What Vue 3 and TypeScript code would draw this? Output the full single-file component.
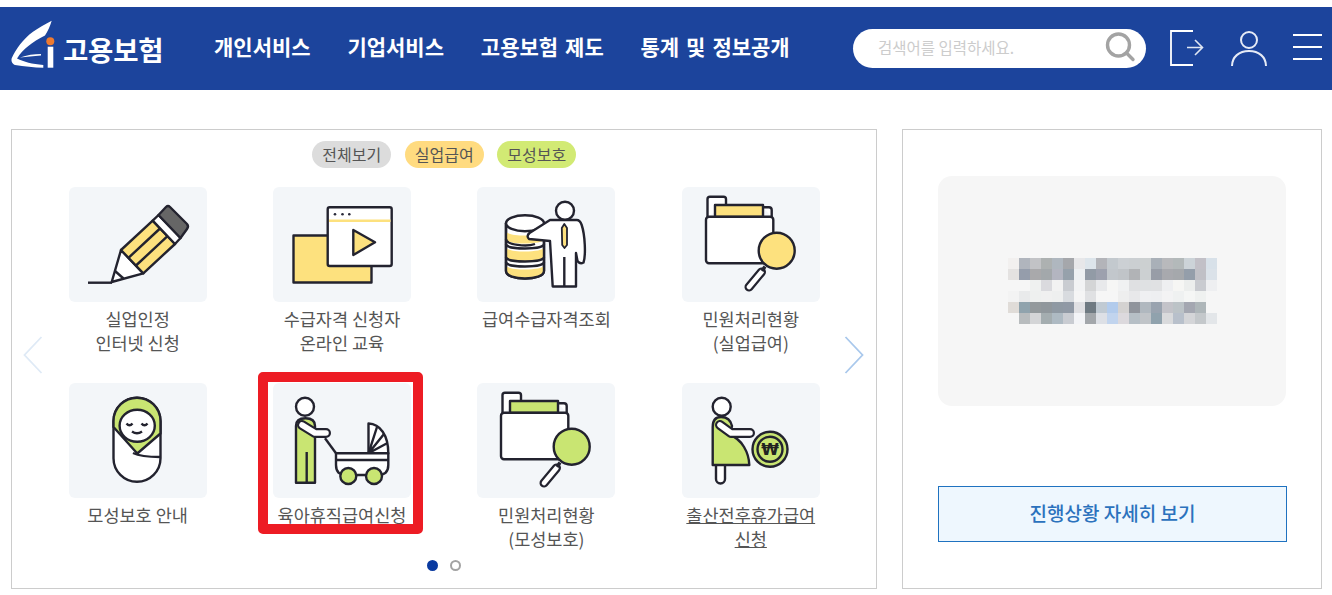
<script setup lang="ts">
interface MenuItem {
  lines: string[];
  icon: string;
  underline?: boolean;
}

const navItems = ['개인서비스', '기업서비스', '고용보험 제도', '통계 및 정보공개'];

const chips = [
  { label: '전체보기', cls: 'chip-all' },
  { label: '실업급여', cls: 'chip-job' },
  { label: '모성보호', cls: 'chip-mom' },
];

const menuItems: MenuItem[] = [
  { lines: ['실업인정', '인터넷 신청'], icon: 'pencil' },
  { lines: ['수급자격 신청자', '온라인 교육'], icon: 'video' },
  { lines: ['급여수급자격조회'], icon: 'database' },
  { lines: ['민원처리현황', '(실업급여)'], icon: 'folder-y' },
  { lines: ['모성보호 안내'], icon: 'baby' },
  { lines: ['육아휴직급여신청'], icon: 'stroller' },
  { lines: ['민원처리현황', '(모성보호)'], icon: 'folder-g' },
  { lines: ['출산전후휴가급여', '신청'], icon: 'mother', underline: true },
];

// blurred block in the status card, 19 x 6 cells
const mosaic = [
  'f2f0ef b0b5bd c2c3c6 adb1b1 afb7bf a5a7ab e7e7e9 dde5eb b3b4b9 c3c9ce ccd0d4 cbcfd2 ccd0d1 a9b0b8 b8b9bc b3b9ba ccd3d8 c2c0c7 d8e1e9',
  'e4e2e1 959dab a9a9ab a3a8ab b3b5c0 96a1ab edf0f2 929ba6 9da1ae c2c7cc c0c4c8 b1b3b6 ccd0d2 989da7 a8a9ae a5a8ac 949eaa c0c0c6 dbe2e9',
  'f6f6f6 f6f6f6 eff1f0 dadade f2f2f2 c9ccd1 f2f3f4 d4d5d6 e8e9eb f6f6f5 f0f1f2 dfe0e2 dfe1e3 e0e1e3 eeeff1 f6f6f4 eceeed c9cbd0 eeeff1',
  'f3f3f3 e9eaeb eef0ef f0f0f0 eeefef d8dbdf f5f5f5 e0e1e3 f6f6f6 f6f6f6 eeeeee e8e8ea eff0f2 eeeff1 f3f3f4 eff1f1 f5f6f5 eff1f0 f6f6f6',
  'e0dcd8 90a3ad 93999c 90979c 8f99a3 9099a5 e0e0e3 6f7a82 c0cad3 b2cbec d4d2d1 90949c b0b8bf 99a3af c3c3c9 bcc3c7 a4a7b1 aeb6b9 f6f6f6',
  'f6f6f6 b8bcbe d4d5d7 a4adb0 aebac3 c9ccd2 f3f4f7 a3a7ab dde0e6 c1d4ee dcd9dd b6bfc6 c0c4c8 90a2ad d9dadc b8c0cb d4d5d8 c4c8cb e3e6e9',
].flatMap((row) => row.split(' ').map((c) => '#' + c));
</script>

<template>
  <div class="page">
    <header class="header">
      <a class="logo">
        <svg class="logo-mark" viewBox="0 0 46 50" width="46" height="50" aria-hidden="true">
          <path d="M41.7 0.7 C36 4 28 8 23 11.7 C13 19 6 29 1.7 38.3 C1 41 2 44 5 45 C14 46.5 24 47.5 33.3 47.7 L33.3 45 C22 44 14 42 7 38.5 C13 29 22 22 35 15.5 C38 11 40 6 41.7 0.7 Z" fill="#fff" />
          <path d="M10 37.5 C17 35 24 34 31 34 L31 35.5 C23 36 17 37 10 37.5 Z" fill="#fff" />
          <rect x="37.7" y="26.7" width="5.6" height="21" fill="#fff" />
          <circle cx="40.3" cy="21.3" r="4" fill="#ee7a30" />
        </svg>
        <span class="logo-text">고용보험</span>
      </a>
      <nav class="nav">
        <a v-for="item in navItems" :key="item">{{ item }}</a>
      </nav>
      <div class="tools">
        <div class="search">
          <span class="placeholder">검색어를 입력하세요.</span>
          <svg viewBox="0 0 32 32" width="32" height="32" aria-hidden="true">
            <circle cx="14.5" cy="14" r="11" fill="none" stroke="#a3a3a3" stroke-width="3.4" />
            <path d="M22.5 22 L29 28.5" stroke="#a3a3a3" stroke-width="3.4" stroke-linecap="round" />
          </svg>
        </div>
        <svg class="tool-logout" viewBox="0 0 34 36" width="34" height="36" aria-hidden="true">
          <path d="M23 1 H1 V35 H23" fill="none" stroke="#fff" stroke-width="1.8" />
          <path d="M17 17.5 H32 M25 10 L32.5 17.5 L25 25" fill="none" stroke="#dfe6f3" stroke-width="1.6" />
        </svg>
        <svg class="tool-user" viewBox="0 0 36 38" width="36" height="38" aria-hidden="true">
          <circle cx="18" cy="11" r="8" fill="none" stroke="#e6ebf6" stroke-width="2" />
          <path d="M1 37 C1 28 8 22 18 22 C28 22 35 28 35 37" fill="none" stroke="#e6ebf6" stroke-width="2" />
        </svg>
        <div class="hamburger"><i /><i /><i /></div>
      </div>
    </header>

    <main class="main">
      <section class="panel menu-panel">
        <div class="chips">
          <span v-for="chip in chips" :key="chip.label" class="chip" :class="chip.cls">{{ chip.label }}</span>
        </div>

        <div class="grid">
          <a v-for="item in menuItems" :key="item.lines[0] + item.icon" class="item">
            <div class="tile">
              <svg viewBox="0 0 138 115" width="138" height="115" class="art" aria-hidden="true">
                <!-- pencil -->
                <g v-if="item.icon === 'pencil'">
                  <path d="M19 95.7 H43" />
                  <path d="M52 63 L74.3 86.3 L42.7 95 Z" fill="#fff" />
                  <path d="M46 84 L54.5 91.5" />
                  <path d="M52 63 L83.7 33.7 L106 57 L74.3 86.3 Z" fill="#fde17e" />
                  <path d="M59.5 70.8 L91 41.5 M67 78.5 L98.5 49.2" />
                  <path d="M83.7 33.7 L89.5 28 L111.5 51 L106 57 Z" fill="#fff" />
                  <path d="M89.5 28 L97 20 Q99 18 101 20 L118 37 Q120 39.5 118 42 L111.5 51 Z" fill="#666" />
                </g>
                <!-- video window -->
                <g v-else-if="item.icon === 'video'">
                  <rect x="20.5" y="48.5" width="78" height="47" fill="#fde17e" />
                  <rect x="54.7" y="20.3" width="64" height="58.7" rx="2" fill="#fff" />
                  <circle cx="62" cy="27.3" r="1.3" fill="#2a2a3a" stroke="none" />
                  <circle cx="69.5" cy="27.3" r="1.3" fill="#2a2a3a" stroke="none" />
                  <circle cx="76.3" cy="27.3" r="1.3" fill="#2a2a3a" stroke="none" />
                  <path d="M56 33.7 H117.5" stroke="#fde17e" />
                  <path d="M80.3 43 L102 55.3 L80.3 68 Z" fill="#fde17e" />
                </g>
                <!-- database and man -->
                <g v-else-if="item.icon === 'database'">
                  <path d="M29 36 V84 C29 94 67 94 67 84 V36 Z" fill="#fff" />
                  <path d="M29 44 C29 50 67 50 67 44 V52 C67 58 29 58 29 52 Z" fill="#fde17e" stroke="none" />
                  <path d="M29 60 C29 66 67 66 67 60 V70 C67 76 29 76 29 70 Z" fill="#fde17e" stroke="none" />
                  <path d="M29 78 C29 84 67 84 67 78 V84 C67 94 29 94 29 84 Z" fill="#fde17e" stroke="none" />
                  <path d="M29 36 V84 C29 94 67 94 67 84 V36" />
                  <path d="M29 52 C29 58 50 60 58 57 M29 57 C29 63 67 63 67 57 M29 70 C29 76 67 76 67 70 M29 75 C29 81 67 81 67 75" />
                  <ellipse cx="48" cy="36.3" rx="19" ry="8" fill="#fff" />
                  <path d="M73 33 L52.5 46 Q49 49 52 52 L73 54 L75.7 99.5 H99 V66 L100.5 74 Q103 77.5 106.5 75.5 C109 68 108 48 104.7 38 Q103 33 99.7 33 Z" fill="#fff" />
                  <path d="M87.3 70 V99.5" />
                  <circle cx="88" cy="23.7" r="9" fill="#fff" />
                  <path d="M87.3 37 L84.8 41 L85.2 58 L87.5 61 L90 58 L90 41 Z" fill="#fde17e" stroke-width="1.8" />
                </g>
                <!-- folder with magnifier -->
                <g v-else-if="item.icon === 'folder-y' || item.icon === 'folder-g'">
                  <path d="M25.5 30 V12 Q25.5 9.7 28 9.7 H41.5 Q44 9.7 44 12 V18" fill="#fff" />
                  <path d="M81 20.3 H87 Q89.7 20.3 89.7 23 V30" fill="#fff" />
                  <rect x="33" y="18" width="48" height="12" :fill="item.icon === 'folder-y' ? '#fde17e' : '#c9e572'" />
                  <rect x="24" y="29.7" width="67.3" height="46.6" rx="3" fill="#fff" />
                  <path d="M79.5 85 L67 100" stroke-width="9" stroke-linecap="round" />
                  <path d="M79.5 85 L67 100" stroke="#fff" stroke-width="4.6" stroke-linecap="round" />
                  <path d="M83 79.5 L80 84" stroke-width="3.4" />
                  <circle cx="94.7" cy="63.7" r="18" :fill="item.icon === 'folder-y' ? '#fde17e' : '#c9e572'" />
                </g>
                <!-- swaddled baby -->
                <g v-else-if="item.icon === 'baby'">
                  <rect x="44.5" y="14.7" width="47" height="84" rx="23.5" fill="#fff" />
                  <path d="M44.5 38.2 C44.5 24 56 14.7 68 14.7 C80 14.7 91.5 24 91.5 38.2 V50.5 L68.3 70.5 L44.5 44 Z" fill="#c9e572" />
                  <path d="M64 70 C72 74 82 74 91 74" />
                  <ellipse cx="68.2" cy="42.7" rx="17.6" ry="16" fill="#fff" />
                  <path d="M57.5 40.5 Q60.5 44 63.5 40.5 M72.5 40.5 Q75.5 44 78.5 40.5" />
                  <path d="M63 48.5 Q68 52 73 48.5" />
                </g>
                <!-- stroller -->
                <g v-else-if="item.icon === 'stroller'">
                  <path d="M23 99.7 V43 Q23 35.3 32.5 35.3 Q42 35.3 42 43 V99.7 Z" fill="#c9e572" />
                  <path d="M33.7 69 V99.7" />
                  <circle cx="32" cy="23.7" r="9" fill="#fff" />
                  <path d="M29 42 L42 50 H53" stroke-width="10" stroke-linecap="round" stroke-linejoin="round" />
                  <path d="M29 42 L42 50 H53" stroke="#fff" stroke-width="5.6" stroke-linecap="round" stroke-linejoin="round" />
                  <path d="M52 55.3 L63 70.3" />
                  <path d="M95.5 40.5 C107 41 115.3 52 115.3 70.3 H95.5 Z" fill="#fff" />
                  <path d="M95.5 70.3 L104 44 M95.5 70.3 L111 51 M95.5 70.3 L114.5 60" />
                  <path d="M63 70.3 H115.3 V82 Q115.3 92 105 92 H73 Q63 92 63 82 Z" fill="#fff" />
                  <path d="M63 77 H115.3" />
                  <circle cx="75.3" cy="93" r="8" fill="#c9e572" />
                  <circle cx="101" cy="93" r="8" fill="#c9e572" />
                </g>
                <!-- pregnant mother with coin -->
                <g v-else-if="item.icon === 'mother'">
                  <rect x="34" y="78" width="9" height="22.5" rx="4.5" fill="#fff" />
                  <path d="M30.7 82 V44 Q30.7 34 39 34 Q48 34 50 43 L48 52 C60 56 67 70 67.3 82 Z" fill="#c9e572" />
                  <circle cx="39.7" cy="23.7" r="9" fill="#fff" />
                  <path d="M38 42 L49 50 H68" stroke-width="10" stroke-linecap="round" stroke-linejoin="round" />
                  <path d="M38 42 L49 50 H68" stroke="#fff" stroke-width="5.6" stroke-linecap="round" stroke-linejoin="round" />
                  <circle cx="88" cy="66.3" r="17.5" fill="#c9e572" />
                  <circle cx="88" cy="66.3" r="12.5" fill="#c9e572" />
                  <text x="88" y="72" class="won">₩</text>
                </g>
              </svg>
            </div>
            <div class="label" :class="{ underline: item.underline }">
              <span v-for="line in item.lines" :key="line">{{ line }}</span>
            </div>
          </a>
        </div>

        <div class="dots">
          <i class="dot on" />
          <i class="dot" />
        </div>

        <svg class="arrow arrow-left" viewBox="0 0 20 38" width="20" height="38" aria-hidden="true">
          <path d="M18.5 1 L1.5 19 L18.5 37" fill="none" stroke="#dfeaf6" stroke-width="1.8" />
        </svg>
        <svg class="arrow arrow-right" viewBox="0 0 20 38" width="20" height="38" aria-hidden="true">
          <path d="M1.5 1 L18.5 19 L1.5 37" fill="none" stroke="#a9c8ec" stroke-width="1.8" />
        </svg>
        <div class="highlight" />
      </section>

      <aside class="panel status-panel">
        <div class="status-card">
          <div class="mosaic">
            <i v-for="(color, i) in mosaic" :key="i" :style="{ background: color }" />
          </div>
        </div>
        <button class="detail-btn" type="button"><span>진행상황 자세히 보기</span></button>
      </aside>
    </main>
  </div>
</template>

<style>
html,
body {
  margin: 0;
  background: #fff;
  overflow: hidden;
}
</style>

<style scoped>
.page {
  width: 1332px;
  height: 595px;
  padding-top: 7px;
  box-sizing: border-box;
  font-family: 'Noto Sans CJK KR', 'Noto Sans', sans-serif;
  color: #555;
}

.header {
  height: 83px;
  background: #1c449c;
  display: flex;
  align-items: center;
  color: #fff;
}

.logo {
  display: flex;
  align-items: center;
  margin-left: 10px;
  width: 204px;
}

.logo-mark {
  margin-bottom: 8px;
}

.logo-text {
  margin-left: 7px;
  font-size: 27.5px;
  font-weight: 700;
  letter-spacing: -0.2px;
  white-space: nowrap;
}

.nav {
  display: flex;
  gap: 36.8px;
  margin-bottom: 5px;
  font-size: 21px;
  font-weight: 700;
  word-spacing: 2.2px;
  white-space: nowrap;
}

.tools {
  margin-left: auto;
  display: flex;
  align-items: center;
  padding-right: 10px;
}

.search {
  width: 293px;
  height: 39px;
  background: #fff;
  border-radius: 20px;
  display: flex;
  align-items: center;
  justify-content: space-between;
  padding: 0 10px 0 25px;
  box-sizing: border-box;
}

.search svg {
  margin-bottom: 4px;
}

.placeholder {
  font-size: 15.5px;
  color: #ccc;
  margin-bottom: 3px;
}

.tool-logout {
  margin-left: 24px;
  margin-bottom: 2px;
}

.tool-user {
  margin-left: 27px;
  margin-bottom: 2px;
}

.hamburger {
  margin-left: 26px;
  margin-bottom: 3px;
  width: 29px;
  display: flex;
  flex-direction: column;
  gap: 10px;
}

.hamburger i {
  display: block;
  height: 2px;
  background: #fff;
}

.main {
  display: flex;
  gap: 25px;
  padding: 39px 10px 0 11px;
}

.panel {
  border: 1px solid #ccc;
  height: 460px;
  box-sizing: border-box;
  position: relative;
}

.menu-panel {
  width: 866px;
  padding: 11px 24px 0 23.4px;
}

.chips {
  display: flex;
  justify-content: center;
  gap: 13.8px;
  padding-left: 1px;
}

.chip {
  width: 78.7px;
  height: 27px;
  border-radius: 14px;
  font-size: 16px;
  line-height: 26px;
  text-align: center;
  color: #555;
}

.chip-all {
  background: #dcdcdc;
}

.chip-job {
  background: #ffdb80;
}

.chip-mom {
  background: #d2ea74;
}

.grid {
  margin-top: 19px;
  display: grid;
  grid-template-columns: repeat(4, 204.4px);
  grid-auto-rows: 168px;
  row-gap: 28px;
}

.item {
  display: flex;
  flex-direction: column;
  align-items: center;
}

.tile {
  width: 138px;
  height: 115px;
  background: #f3f6f9;
  border-radius: 6px;
}

.art {
  display: block;
  fill: none;
  stroke: #23232f;
  stroke-width: 2.4;
  stroke-linejoin: round;
}

.won {
  font-family: 'DejaVu Sans', sans-serif;
  font-size: 16px;
  font-weight: 700;
  fill: #222;
  stroke: none;
  text-anchor: middle;
}

.label {
  margin-top: 5px;
  font-size: 17.5px;
  line-height: 24px;
  text-align: center;
  color: #555;
  white-space: nowrap;
}

.label span {
  display: block;
}

.label.underline {
  text-decoration: underline;
}

.dots {
  position: absolute;
  left: 0;
  right: 0;
  top: 430px;
  display: flex;
  justify-content: center;
  gap: 12px;
}

.dot {
  width: 11px;
  height: 11px;
  box-sizing: border-box;
  border: 2px solid #a3a3a3;
  border-radius: 50%;
}

.dot.on {
  background: #0a3aa0;
  border-color: #0a3aa0;
}

.arrow {
  position: absolute;
  top: 206px;
}

.arrow-left {
  left: 11px;
}

.arrow-right {
  right: 12px;
}

.highlight {
  position: absolute;
  left: 246px;
  top: 242px;
  width: 165px;
  height: 162px;
  box-sizing: border-box;
  border: 10px solid #ed1c24;
  border-radius: 5px;
}

.status-panel {
  width: 420px;
  padding: 46px 35px 0;
}

.status-card {
  width: 348px;
  height: 230px;
  background: #f6f6f6;
  border-radius: 14px;
  display: flex;
  justify-content: center;
  align-items: center;
}

.mosaic {
  display: grid;
  grid-template-columns: repeat(19, 11px);
  grid-auto-rows: 11px;
  margin-left: 1px;
}

.detail-btn {
  display: block;
  width: 349px;
  height: 56px;
  margin-top: 80px;
  padding: 0 0 3px;
  background: #eef7fe;
  border: 1px solid #1f72c0;
  color: #2b72bd;
  font-family: inherit;
  font-size: 19px;
  font-weight: 500;
}
</style>
